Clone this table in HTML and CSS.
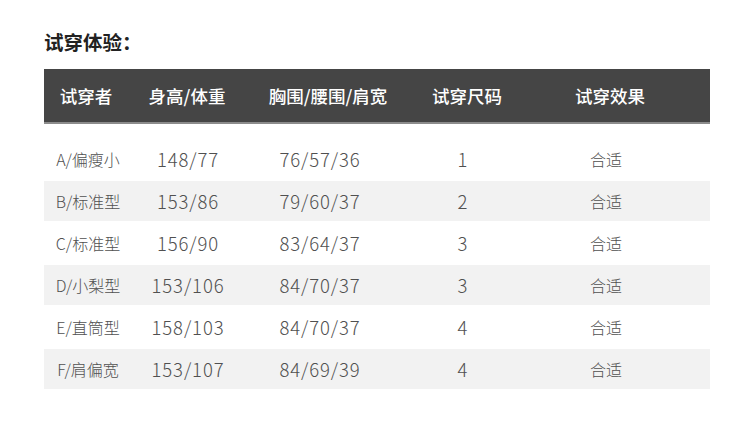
FILE: index.html
```html
<!DOCTYPE html>
<html lang="zh">
<head>
<meta charset="utf-8">
<link rel="stylesheet" href="styles.css">
</head>
<body>
<div class="page">
  <h2 class="title">试穿体验：</h2>
  <div class="table">
    <div class="row head">
      <div class="c1">试穿者</div>
      <div class="c2">身高/体重</div>
      <div class="c3">胸围/腰围/肩宽</div>
      <div class="c4">试穿尺码</div>
      <div class="c5">试穿效果</div>
    </div>
    <div class="body">
      <div class="row">
        <div class="c1 label">A/偏瘦小</div><div class="c2 num">148/77</div><div class="c3 num">76/57/36</div><div class="c4 num">1</div><div class="c5 label">合适</div>
      </div>
      <div class="row alt">
        <div class="c1 label">B/标准型</div><div class="c2 num">153/86</div><div class="c3 num">79/60/37</div><div class="c4 num">2</div><div class="c5 label">合适</div>
      </div>
      <div class="row">
        <div class="c1 label">C/标准型</div><div class="c2 num">156/90</div><div class="c3 num">83/64/37</div><div class="c4 num">3</div><div class="c5 label">合适</div>
      </div>
      <div class="row alt">
        <div class="c1 label">D/小梨型</div><div class="c2 num">153/106</div><div class="c3 num">84/70/37</div><div class="c4 num">3</div><div class="c5 label">合适</div>
      </div>
      <div class="row">
        <div class="c1 label">E/直筒型</div><div class="c2 num">158/103</div><div class="c3 num">84/70/37</div><div class="c4 num">4</div><div class="c5 label">合适</div>
      </div>
      <div class="row alt">
        <div class="c1 label">F/肩偏宽</div><div class="c2 num">153/107</div><div class="c3 num">84/69/39</div><div class="c4 num">4</div><div class="c5 label">合适</div>
      </div>
    </div>
  </div>
</div>
</body>
</html>
```

FILE: styles.css
```css
html, body {
  margin: 0;
  padding: 0;
  background: #ffffff;
}
body {
  font-family: "Noto Sans CJK SC", "Noto Sans", sans-serif;
}
.page {
  width: 666px;
  padding: 28px 0 0 44px;
}
.title {
  margin: 0;
  font-size: 19.5px;
  line-height: 28px;
  font-weight: 700;
  color: #222222;
}
.table {
  margin-top: 13px;
}
.row {
  display: grid;
  grid-template-columns: 84px 118px 156px 126px 160px 22px;
  align-items: center;
  text-align: center;
}
.head {
  height: 53px;
  background: #454545;
  border-bottom: 2px solid #8c8c8c;
  color: #ffffff;
  font-size: 17.5px;
  font-weight: 500;
}
.body {
  margin-top: 15px;
  display: flex;
  flex-direction: column;
  gap: 2px;
}
.body .row {
  height: 40px;
  color: #505050;
}
.alt {
  background: #f2f2f2;
}
.label {
  font-size: 16px;
  font-weight: 300;
}
.num {
  font-size: 18.5px;
  font-weight: 300;
  letter-spacing: 0.9px;
  font-family: "Noto Sans CJK SC", "Noto Sans", sans-serif;
}
.body .c1 { padding-left: 4px; }
.body .c2 { padding-left: 2px; }
.body .c3 { padding-right: 8px; }
.body .c4 { padding-right: 4px; }
.body .c5 { padding-right: 4px; }
.head .c3 { padding-left: 8px; }
.head .c4 { padding-left: 4px; }
.head .c5 { padding-left: 4px; }
```
